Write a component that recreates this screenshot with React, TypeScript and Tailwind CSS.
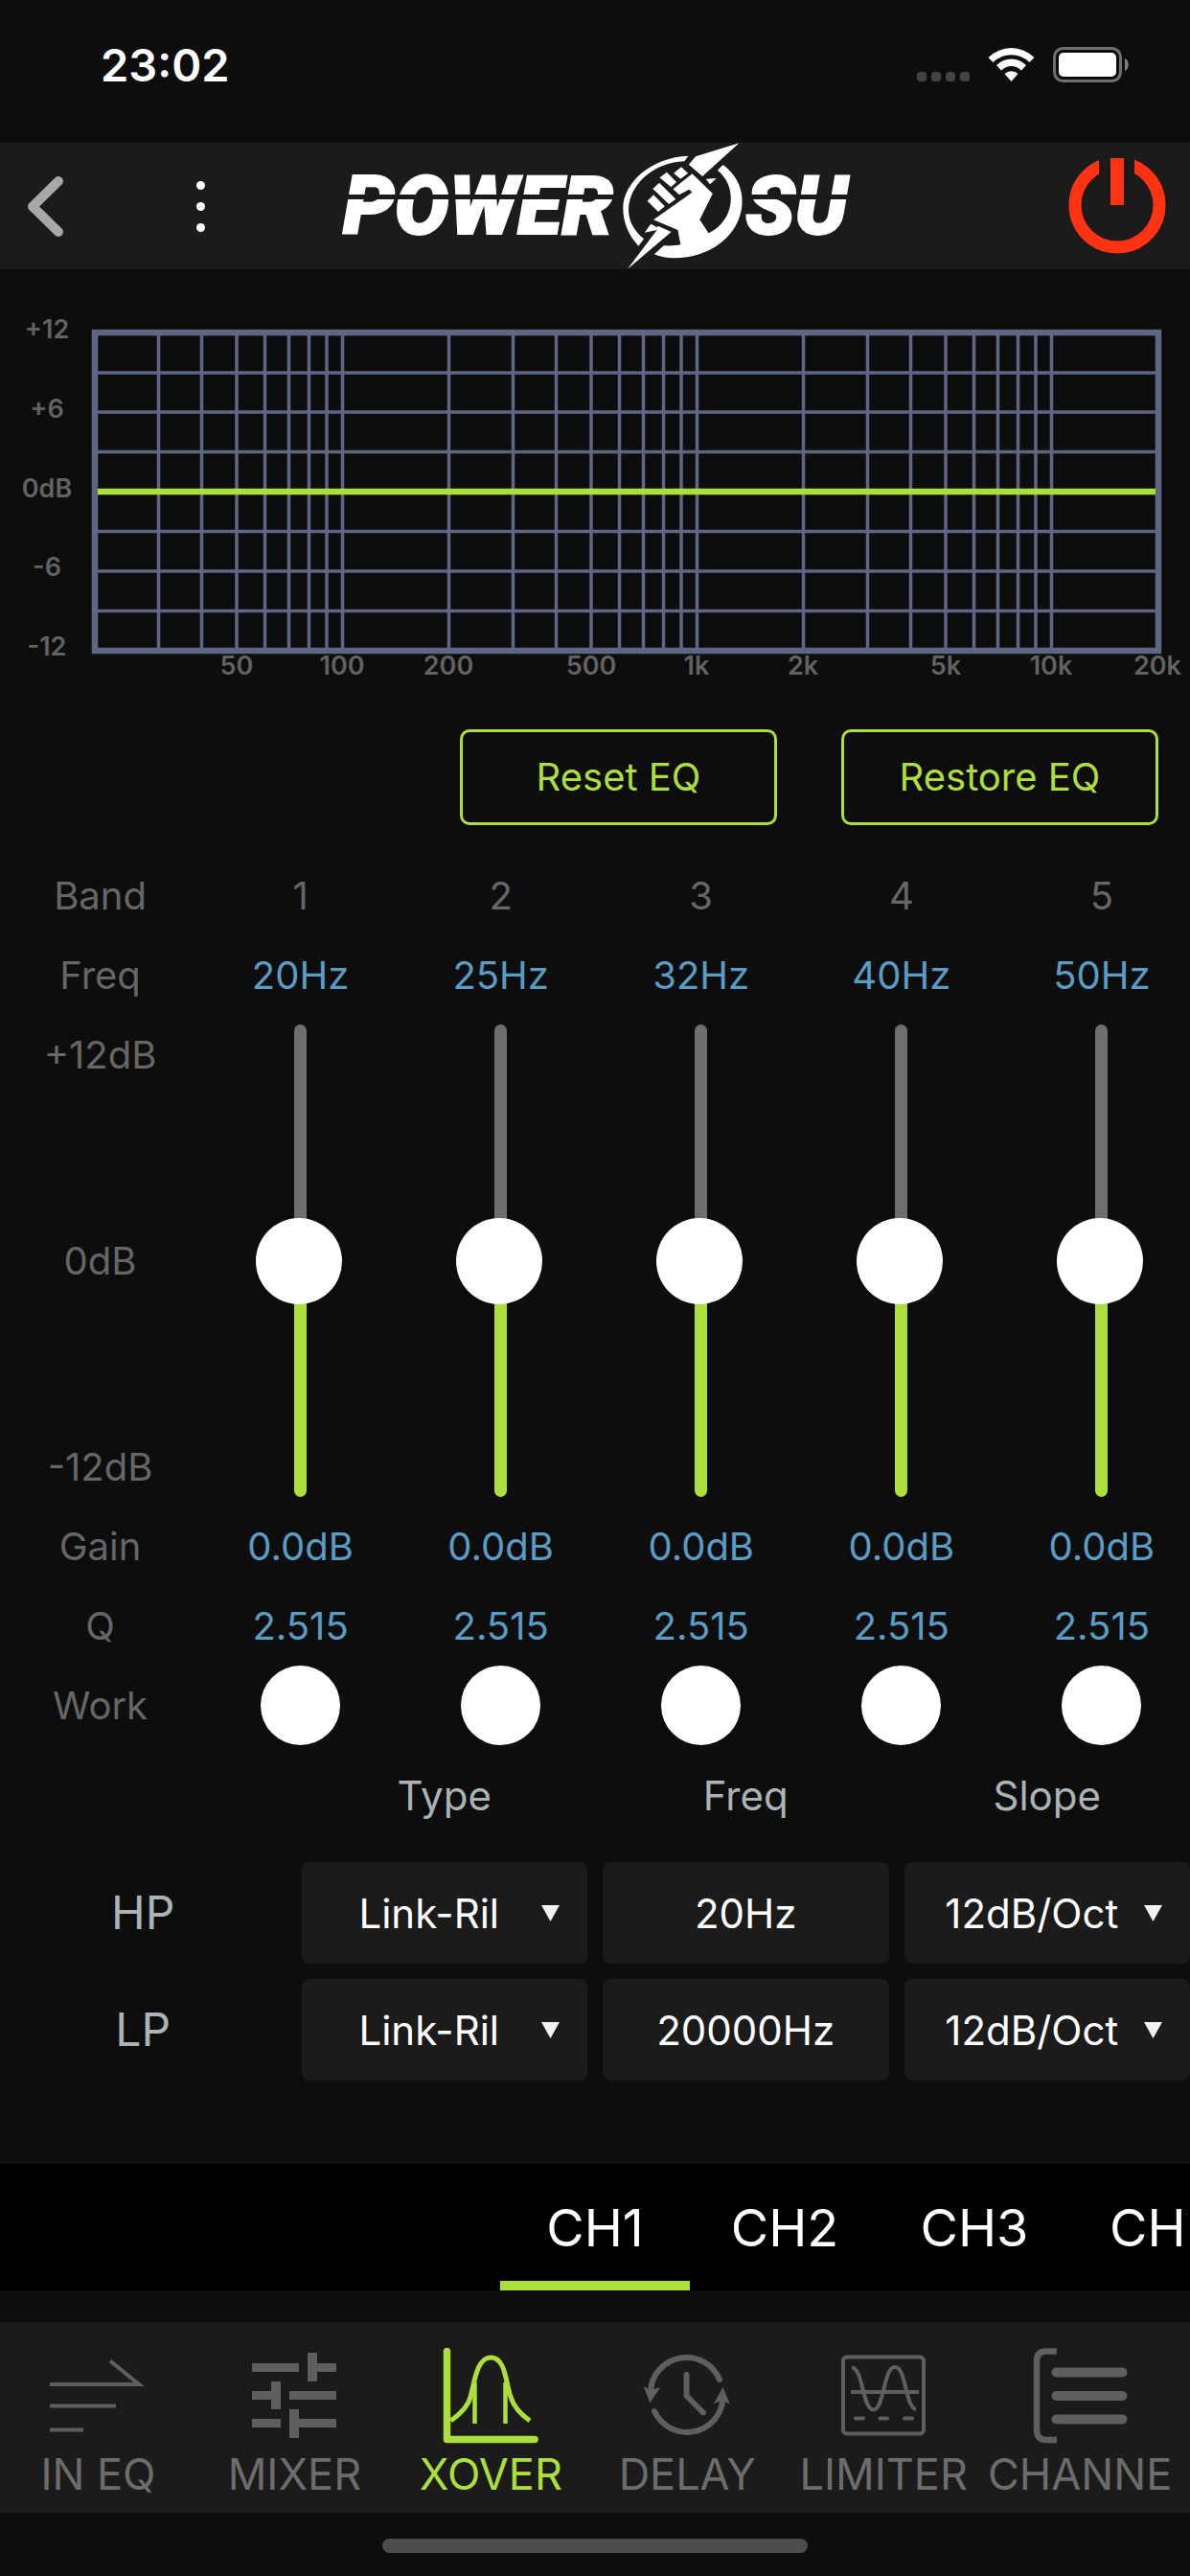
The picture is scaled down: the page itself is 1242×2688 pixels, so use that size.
import React, { useState } from "react";

const GREEN = "#addf3c";

function StatusBar() {
  return (
    <div className="flex h-[149px] items-start justify-between pt-[35px] pr-[62px] pl-[105px]">
      <time className="text-[47px] leading-[66px] font-semibold text-white">23:02</time>
      <svg width="240" height="70" viewBox="0 0 240 70" role="img" aria-label="Wi-Fi connected, battery full">
        {[17, 32, 47, 62].map((x) => (
          <rect key={x} x={x} y="40" width="10" height="10" rx="3.5" fill="#434343" />
        ))}
        <g fill="#fff">
          <path d="M91.5 25 A34 34 0 0 1 139.500 25 L134.500 30 A27 27 0 0 0 96.500 30 Z" />
          <path d="M100 33 A22 22 0 0 1 131 33 L126 38.500 A14.500 14.500 0 0 0 105 38.500 Z" />
          <path d="M108.500 42 A10.500 10.500 0 0 1 122.500 42 L115.500 50 Z" />
        </g>
        <rect x="160.500" y="15.500" width="69" height="34" rx="9" fill="none" stroke="#707070" strokeWidth="3" />
        <rect x="165" y="20" width="60" height="25" rx="5" fill="#fff" />
        <path d="M234 26 C239 28 239 37 234 39 Z" fill="#808080" />
      </svg>
    </div>
  );
}

function Logo() {
  return (
    <svg width="560" height="132" viewBox="0 9 560 132" role="img" aria-label="Power SU">
      <g fill="#fff" stroke="#fff" strokeWidth="2" fontFamily="Roboto" fontWeight="900" fontStyle="italic" fontSize="85">
        <text x="17" y="104">POWER</text>
        <text x="437" y="104">SU</text>
      </g>
      <rect x="10" y="63" width="296" height="5" fill="#1b1b1b" />
      <rect x="434" y="63" width="116" height="5" fill="#1b1b1b" />
      <g fill="#fff" transform="scale(0.35714 0.33333)">
        <path d="M1205 28 L1078 70 L1058 95 L1098 132 Z" />
        <path d="M1057 68 C950 72 866 150 866 232 C866 280 885 320 911 350 L927 328 C900 305 882 275 882 235 C885 160 950 90 1045 85 Z" />
        <path d="M1158 96 C1195 125 1214 165 1214 210 C1214 310 1125 388 1015 388 C995 388 975 384 957 376 L985 349 C1005 350 1020 349 1034 346 L1026 300 L955 268 L1068 182 L1059 173 L1030 190 L1012 172 L1068 124 L1128 186 L1090 268 L1116 310 C1155 290 1181 250 1181 200 C1181 165 1167 135 1142 113 Z" />
        <path d="M955 190 L937 209 L969 243 L988 226 Z" />
        <path d="M972 152 L953 171 L1000 219 L1020 203 Z" />
        <path d="M994 119 L973 136 L1006 166 L1022 150 Z" />
        <path d="M1036 103 L1014 122 L1034 140 L1056 122 Z" />
        <path d="M1108 140 L1139 138 L1120 157 Z" />
        <path d="M947 281 L929 308 L965 300 L879 422 L1007 306 L968 287 L966 292 Z" />
      </g>
    </svg>
  );
}

function Header() {
  return (
    <header className="grid h-[132px] grid-cols-[1fr_auto_1fr] items-center bg-[#1b1b1b]">
      <div className="flex items-center gap-[90px] pl-[22px]">
        <button type="button" aria-label="Back">
          <svg width="50" height="80" viewBox="0 0 50 80" fill="none" stroke="#a8a8a8" strokeWidth="10" strokeLinecap="round" strokeLinejoin="round">
            <path d="M39 14 L12 40.500 L39 67" />
          </svg>
        </button>
        <button type="button" aria-label="More options" className="flex w-[94px] flex-col items-center gap-[13px]">
          <span className="size-[9px] rounded-full bg-white" />
          <span className="size-[9px] rounded-full bg-white" />
          <span className="size-[9px] rounded-full bg-white" />
        </button>
      </div>
      <Logo />
      <button type="button" aria-label="Power" className="mr-[25px] justify-self-end">
        <svg width="102" height="100" viewBox="0 0 102 100">
          <circle cx="51" cy="49" r="44" fill="none" stroke="#ff3311" strokeWidth="13" />
          <rect x="32" y="-2" width="37" height="40" fill="#1b1b1b" />
          <rect x="44" y="0" width="14" height="49" fill="#ff3311" />
        </svg>
      </button>
    </header>
  );
}

const decadeStarts = [-12.5, 357.5, 727.5, 1097.5];
const decadeSteps = [0, 111, 178, 223, 259.5, 289, 314, 335, 353.5];
const verticals = decadeStarts
  .flatMap((start) => decadeSteps.map((step) => start + step))
  .filter((x) => x > 110 && x < 1190);
const horizontals = [389, 430, 471.5, 513, 554.5, 596, 637.5];
const gainTicks: [string, number][] = [["+12", 353], ["+6", 436], ["0dB", 519], ["-6", 601], ["-12", 684]];
const freqTicks: [string, number][] = [
  ["50", 247], ["100", 357], ["200", 468], ["500", 617], ["1k", 727],
  ["2k", 838], ["5k", 987], ["10k", 1097], ["20k", 1208],
];

function ResponseChart() {
  return (
    <svg className="mt-[29px] block w-full" viewBox="0 310 1242 405" role="img" aria-label="Frequency response">
      <g stroke="#5f6684" strokeWidth="3.500" fill="none">
        {verticals.map((x) => (
          <line key={x} x1={x} x2={x} y1="348" y2="678" />
        ))}
        {horizontals.map((y) => (
          <line key={y} x1="99" x2="1209" y1={y} y2={y} />
        ))}
        <rect x="99" y="347" width="1110" height="332" strokeWidth="6.500" />
      </g>
      <line x1="102" x2="1206" y1="513" y2="513" stroke={GREEN} strokeWidth="6.500" />
      <g fill="#626262" fontFamily="Inter" fontWeight="600" fontSize="27" textAnchor="middle">
        {gainTicks.map(([label, y]) => (
          <text key={label} x="49" y={y}>{label}</text>
        ))}
        {freqTicks.map(([label, x]) => (
          <text key={label} x={x} y="704">{label}</text>
        ))}
      </g>
    </svg>
  );
}

const bands = [
  { id: 1, freq: "20Hz" },
  { id: 2, freq: "25Hz" },
  { id: 3, freq: "32Hz" },
  { id: 4, freq: "40Hz" },
  { id: 5, freq: "50Hz" },
];

function Band({ id, freq }: { id: number; freq: string }) {
  const [gain, setGain] = useState(0);
  const filled = ((gain + 12) / 24) * 100;
  return (
    <div className="flex flex-col items-center text-[#5a9cc4]">
      <span className="h-[83px] text-[#666]">{id}</span>
      <button type="button" className="h-[83px]" aria-label={`Band ${id} frequency`}>{freq}</button>
      <div className="relative grid h-[513px] w-full place-items-center">
        <div
          className="h-[493px] w-[13px] rounded-full"
          style={{ background: `linear-gradient(to top, ${GREEN} ${filled}%, #6e6e6e ${filled}%)` }}
        />
        <input
          type="range"
          min={-12}
          max={12}
          step={0.1}
          value={gain}
          onChange={(e) => setGain(Number(e.target.value))}
          aria-label={`Band ${id} gain`}
          className="absolute inset-y-0 right-1 left-0 m-auto h-[493px] w-[90px] appearance-none bg-transparent [direction:rtl] [writing-mode:vertical-lr] [&::-webkit-slider-thumb]:size-[90px] [&::-webkit-slider-thumb]:appearance-none [&::-webkit-slider-thumb]:rounded-full [&::-webkit-slider-thumb]:bg-white"
        />
      </div>
      <button type="button" className="h-[83px]" aria-label={`Band ${id} gain value`}>{gain.toFixed(1)}dB</button>
      <button type="button" className="h-[83px]" aria-label={`Band ${id} Q`}>2.515</button>
      <input type="checkbox" aria-label={`Band ${id} work`} className="size-[83px] appearance-none rounded-full bg-white checked:bg-[#addf3c]" />
    </div>
  );
}

function Equalizer() {
  return (
    <section className="mt-8 overflow-hidden">
      <div className="grid w-[101%] grid-cols-6 text-[40px] leading-[83px]">
        <div className="flex flex-col text-center text-[#666]">
          <span>Band</span>
          <span>Freq</span>
          <div className="flex h-[513px] flex-col justify-between">
            <span>+12dB</span>
            <span>0dB</span>
            <span>-12dB</span>
          </div>
          <span>Gain</span>
          <span>Q</span>
          <span>Work</span>
        </div>
        {bands.map((b) => (
          <Band key={b.id} {...b} />
        ))}
      </div>
    </section>
  );
}

function Picker({ label, options }: { label: string; options: string[] }) {
  return (
    <div className="relative h-[106px]">
      <select aria-label={label} className="size-full appearance-none rounded-lg bg-[#1b1b1b] pr-8 text-center [text-align-last:center] text-white">
        {options.map((o) => (
          <option key={o}>{o}</option>
        ))}
      </select>
      <svg className="pointer-events-none absolute inset-y-0 right-[29px] my-auto" width="19" height="17" viewBox="0 0 19 17">
        <path d="M0 0 H19 L9.500 17 Z" fill="#f2f2f2" />
      </svg>
    </div>
  );
}

function FilterRow({ name, freq }: { name: string; freq: string }) {
  return (
    <>
      <div className="text-center text-[48px] leading-[106px] text-[#abb3b6]">{name}</div>
      <Picker label={`${name} type`} options={["Link-Ril", "Butterworth", "Bessel"]} />
      <input aria-label={`${name} frequency`} defaultValue={freq} className="h-[106px] w-full min-w-0 rounded-lg bg-[#1b1b1b] text-center text-white" />
      <Picker label={`${name} slope`} options={["12dB/Oct", "18dB/Oct", "24dB/Oct"]} />
    </>
  );
}

function Filters() {
  return (
    <section className="grid grid-cols-4 gap-4 text-[42px]">
      <span />
      {["Type", "Freq", "Slope"].map((h) => (
        <div key={h} className="text-center leading-[106px] text-[#abb3b6]">{h}</div>
      ))}
      <FilterRow name="HP" freq="20Hz" />
      <FilterRow name="LP" freq="20000Hz" />
    </section>
  );
}

function Channels() {
  const [active, setActive] = useState("CH1");
  return (
    <div className="mt-[87px] flex h-[132px] overflow-hidden bg-black pl-[calc(50%-99px)] text-[54px] text-white">
      {["CH1", "CH2", "CH3"].map((ch) => (
        <button
          key={ch}
          type="button"
          onClick={() => setActive(ch)}
          className={
            ch === active
              ? "w-[198px] shrink-0 border-b-[10px] border-[#addf3c] pt-[10px]"
              : "w-[198px] shrink-0 border-b-[10px] border-transparent pt-[10px]"
          }
        >
          {ch}
        </button>
      ))}
      <button type="button" className="flex-1 pl-[42px] text-left">CH</button>
    </div>
  );
}

const tabs: { label: string; icon: React.ReactNode }[] = [
  {
    label: "IN EQ",
    icon: (
      <g fill="none" stroke="currentColor" strokeWidth="4">
        <path d="M0 38 H93 L63 13.500" />
        <path d="M0 60.500 H69 M0 85.500 H35" />
      </g>
    ),
  },
  {
    label: "MIXER",
    icon: (
      <g fill="currentColor">
        <path d="M6 16 H55 V25 H6 Z M64 5 H74 V16 H94 V25 H74 V35 H64 Z" />
        <path d="M6 45 H26 V35 H36 V64 H26 V54 H6 Z M45 45 H94 V54 H45 Z" />
        <path d="M6 74 H36 V83 H6 Z M45 64 H55 V74 H94 V83 H55 V94 H45 Z" />
      </g>
    ),
  },
  {
    label: "XOVER",
    icon: (
      <g fill="none" stroke="currentColor">
        <path d="M4.500 3.500 V95.500 H96" strokeWidth="7.500" strokeLinecap="round" strokeLinejoin="round" />
        <path d="M8.500 76 C21 67 27 60 29 51 C33 38 35 10 50.500 10 C66 10 66 38 71 51 C74 61 81 69 91 76" strokeWidth="5" />
        <path d="M33.500 36 V79 M65.500 36 V79" strokeWidth="4.500" />
      </g>
    ),
  },
  {
    label: "DELAY",
    icon: (
      <g fill="none" stroke="currentColor" strokeWidth="6" strokeLinecap="round" strokeLinejoin="round">
        <path d="M84 33 A37.500 37.500 0 0 0 12 45" />
        <path d="M16 66 A37.500 37.500 0 0 0 87.500 53" />
        <path d="M49.500 28 V50 L67 67.500" />
        <path d="M4.500 40 L11.500 57.500 L22 41 L12 44 Z M87.500 41 L95 58.500 L87 55 L78 58 Z" fill="currentColor" stroke="none" />
      </g>
    ),
  },
  {
    label: "LIMITER",
    icon: (
      <g fill="none" stroke="currentColor" strokeWidth="4">
        <rect x="8" y="9.500" width="84" height="80" rx="4" />
        <path d="M16 46 H87" />
        <path d="M17 20.500 C29 21 28 64.500 39.500 64.500 C51 64.500 50 20 62 20 C74 20 72 60 84 64.500" />
        <path d="M21 73.500 H29 M46.500 73.500 H54 M72 73.500 H80" strokeLinecap="round" />
      </g>
    ),
  },
  {
    label: "CHANNE",
    icon: (
      <g fill="none" stroke="currentColor">
        <path d="M26 3.500 H15 Q5 3.500 5 14 V85 Q5 96 15 96 H26" strokeWidth="6.500" />
        <path d="M25.500 25.500 H94.500 M25.500 50 H94.500 M25.500 74.500 H94.500" strokeWidth="10" strokeLinecap="round" />
      </g>
    ),
  },
];

function TabBar() {
  const [active, setActive] = useState("XOVER");
  return (
    <nav className="mt-[33px] h-[199px] bg-[#1b1b1b] pt-[27px]">
      <div className="grid w-[99%] grid-cols-6">
        {tabs.map(({ label, icon }) => (
          <button
            key={label}
            type="button"
            onClick={() => setActive(label)}
            aria-current={label === active ? "page" : undefined}
            className={
              label === active
                ? "flex flex-col items-center gap-[6px] text-[#addf3c]"
                : "flex flex-col items-center gap-[6px] text-[#5f5f5f]"
            }
          >
            <svg width="100" height="100" viewBox="0 0 100 100" aria-hidden="true">{icon}</svg>
            <span className={label === active ? "text-[45px] leading-[52px]" : "text-[45px] leading-[52px] text-[#6c6c6c]"}>{label}</span>
          </button>
        ))}
      </div>
    </nav>
  );
}

export default function App() {
  return (
    <div className="min-h-screen overflow-hidden bg-[#0d0d0d] font-['Inter',sans-serif]">
      <StatusBar />
      <Header />
      <main>
        <ResponseChart />
        <div className="mt-[46px] flex justify-end gap-[67px] pr-[33px] text-[40px] text-[#addf3c]">
          <button type="button" className="h-[100px] w-[331px] rounded-[10px] border-3 border-[#addf3c]">Reset EQ</button>
          <button type="button" className="h-[100px] w-[331px] rounded-[10px] border-3 border-[#addf3c]">Restore EQ</button>
        </div>
        <Equalizer />
        <Filters />
        <Channels />
      </main>
      <TabBar />
      <div className="mx-auto mt-[27px] h-[15px] w-[444px] rounded-full bg-[#4d4d4d]" />
    </div>
  );
}
